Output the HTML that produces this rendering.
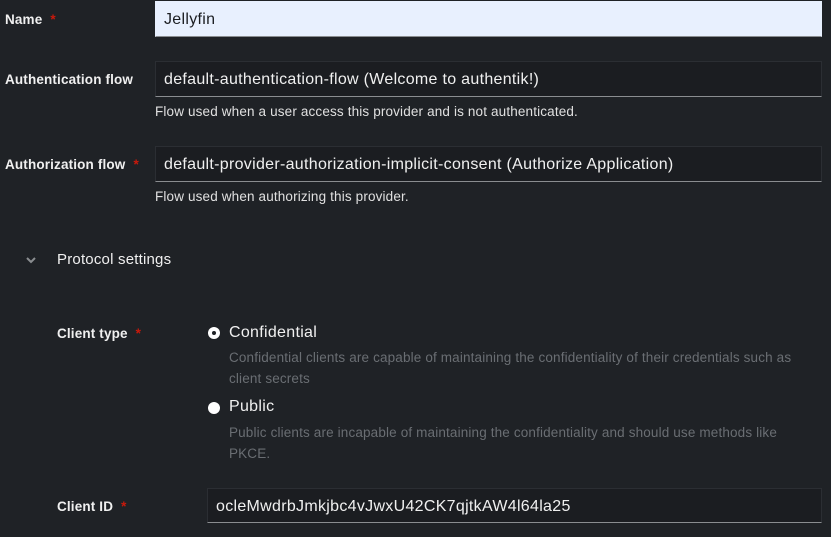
<!DOCTYPE html><html><head><style>
body{margin:0;width:831px;height:537px;background:#1f2226;font-family:"Liberation Sans",sans-serif;color:#e0e0e0;position:relative;overflow:hidden}
.a{position:absolute}
.lbl{font-weight:bold;font-size:13.5px;color:#f0f0f0;letter-spacing:0.15px}
.req{color:#c9190b;margin-left:8px}
.in{position:absolute;box-sizing:border-box;background:#1b1d21;border:1px solid #2b2e33;border-bottom:1px solid #8a8d90;font-size:16px;color:#f0f0f0;padding:1px 8px 0;line-height:34px;white-space:nowrap;letter-spacing:0.3px}
.help{font-size:13.5px;color:#e0e0e0;letter-spacing:0.15px}
.desc{font-size:13.5px;color:#6a6e73;line-height:21px;letter-spacing:0.15px}
.radio{position:absolute;width:12px;height:12px;border-radius:50%;background:#fff}
</style></head><body>
<div class="a lbl" style="left:5px;top:12px">Name<span class="req">*</span></div>
<div class="in" style="left:155px;top:1px;width:667px;height:36px;background:#e8f0fe;color:#1b1d21;border-color:#e8f0fe;border-bottom-color:#8a8d90">Jellyfin</div>
<div class="a lbl" style="left:5px;top:72px">Authentication flow</div>
<div class="in" style="left:155px;top:61px;width:667px;height:36px">default-authentication-flow (Welcome to authentik!)</div>
<div class="a help" style="left:155px;top:104px">Flow used when a user access this provider and is not authenticated.</div>
<div class="a lbl" style="left:5px;top:157px">Authorization flow<span class="req">*</span></div>
<div class="in" style="left:155px;top:146px;width:667px;height:36px">default-provider-authorization-implicit-consent (Authorize Application)</div>
<div class="a help" style="left:155px;top:189px">Flow used when authorizing this provider.</div>
<svg class="a" style="left:25px;top:255px" width="12" height="10"><path d="M2 3l4 4 4-4" stroke="#8a8d90" stroke-width="2" fill="none"/></svg>
<div class="a" style="left:57px;top:251px;font-size:15px;color:#f0f0f0;letter-spacing:0.2px">Protocol settings</div>
<div class="a lbl" style="left:57px;top:326px">Client type<span class="req">*</span></div>
<div class="radio" style="left:208px;top:327px"></div><div class="a" style="left:212px;top:331px;width:4px;height:4px;border-radius:50%;background:#1f2226"></div>
<div class="a" style="left:229px;top:324px;font-size:16px;color:#f0f0f0;letter-spacing:0.3px">Confidential</div>
<div class="a desc" style="left:229px;top:347px;width:580px">Confidential clients are capable of maintaining the confidentiality of their credentials such as client secrets</div>
<div class="radio" style="left:208px;top:402px"></div>
<div class="a" style="left:229px;top:398px;font-size:16px;color:#f0f0f0;letter-spacing:0.3px">Public</div>
<div class="a desc" style="left:229px;top:422px;width:570px">Public clients are incapable of maintaining the confidentiality and should use methods like PKCE.</div>
<div class="a lbl" style="left:57px;top:499px">Client ID<span class="req">*</span></div>
<div class="in" style="left:207px;top:488px;width:615px;height:35px">ocleMwdrbJmkjbc4vJwxU42CK7qjtkAW4l64la25</div>
</body></html>
